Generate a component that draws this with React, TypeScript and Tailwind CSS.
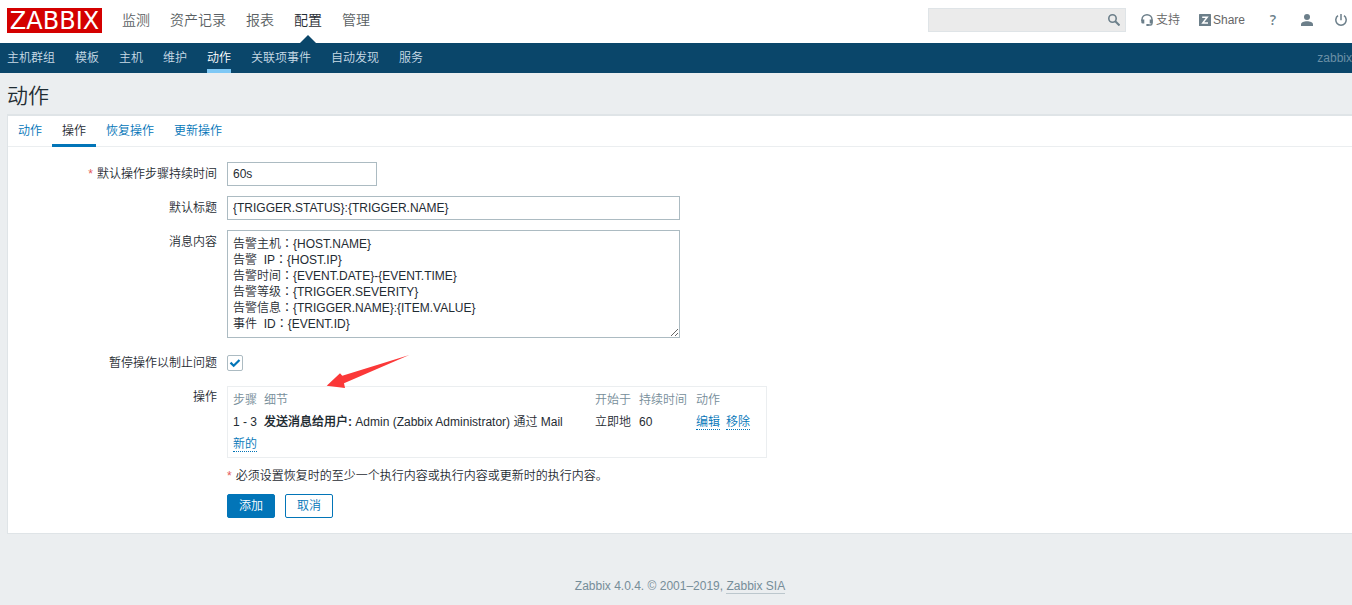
import type { ReactNode } from "react";

const mainMenu = ["监测", "资产记录", "报表", "配置", "管理"];
const subMenu = ["主机群组", "模板", "主机", "维护", "动作", "关联项事件", "自动发现", "服务"];
const tabs = ["动作", "操作", "恢复操作", "更新操作"];

const message = [
  "告警主机：{HOST.NAME}",
  "告警  IP：{HOST.IP}",
  "告警时间：{EVENT.DATE}-{EVENT.TIME}",
  "告警等级：{TRIGGER.SEVERITY}",
  "告警信息：{TRIGGER.NAME}:{ITEM.VALUE}",
  "事件  ID：{EVENT.ID}",
].join("\n");

function SearchIcon() {
  return (
    <svg width="12" height="12" viewBox="0 0 12 12" fill="none" stroke="#6c7f8a">
      <circle cx="4.500" cy="4.500" r="3.700" strokeWidth="1.600" />
      <path d="M7.3 7.3 11.5 11.5" strokeWidth="2" />
    </svg>
  );
}

function HeadsetIcon() {
  return (
    <svg width="12" height="12" viewBox="0 0 12 12" fill="none">
      <path d="M1 7V5.400a5 4.700 0 0 1 10 0V9.400a1.600 1.600 0 0 1-1.600 1.600H6.200" stroke="#6c7f8a" strokeWidth="1.400" />
      <path d="M.300 5.600h3v4H1.700A1.400 1.400 0 0 1 .300 8.200zM8.700 5.600h3v2.600A1.400 1.400 0 0 1 10.300 9.600H8.700zM5.400 10h2.300v2H5.400z" fill="#6c7f8a" />
    </svg>
  );
}

function ShareIcon() {
  return (
    <svg width="12" height="12" viewBox="0 0 12 12">
      <rect width="12" height="12" rx="0.500" fill="#6c7f8a" />
      <path d="M3.200 3.300H8.200L3.800 8.900H9" fill="none" stroke="#fff" strokeWidth="1.500" />
    </svg>
  );
}

function UserIcon() {
  return (
    <svg width="12" height="12" viewBox="0 0 12 12" fill="#6c7f8a">
      <circle cx="6" cy="3" r="3" />
      <path d="M0 12V10.400C0 8.500 3 7.300 6 7.300s6 1.200 6 3.100V12z" />
    </svg>
  );
}

function PowerIcon() {
  return (
    <svg width="12" height="12" viewBox="0 0 12 12" fill="none" stroke="#6c7f8a" strokeWidth="1.500">
      <path d="M6 0v6.200M3 1.700a5.200 5.200 0 1 0 6 0" />
    </svg>
  );
}

function Row({ label, htmlFor, required, children }: { label?: string; htmlFor?: string; required?: boolean; children: ReactNode }) {
  return (
    <div className="flex items-start gap-2.5">
      <div className="w-[209px] shrink-0 text-right leading-6">
        {required && <span className="mr-1 text-[#e45959]">*</span>}
        {label && <label htmlFor={htmlFor}>{label}</label>}
      </div>
      {children}
    </div>
  );
}

function DottedButton({ children }: { children: ReactNode }) {
  return (
    <button type="button" className="cursor-pointer border-b border-dotted border-[#0275b8] pt-0.5 leading-[13px] text-[#0275b8]">
      {children}
    </button>
  );
}

export default function App() {
  return (
    <div className="min-h-screen overflow-x-hidden bg-[#ebeef0] font-['Liberation_Sans','Noto_Sans_CJK_SC_DemiLight','Noto_Sans_CJK_SC',sans-serif] text-xs font-[350] text-[#1f2c33]">
      <header>
        <div className="flex h-[43px] items-start justify-between bg-white pt-2 pr-[5px] pl-[7px]">
          <div className="flex">
            <a href="#home" className="flex h-[25px] w-[95px] items-center justify-center bg-[#d40000] font-['DejaVu_Sans',sans-serif] text-2xl leading-6 font-normal text-white">
              ZABBIX
            </a>
            <nav className="ml-5 flex gap-5 text-sm leading-6 text-[#5a5f63]">
              {mainMenu.map((item) => (
                <a key={item} href="#menu" className={item === "配置" ? "relative h-[35px] text-[#1f2c33]" : ""}>
                  {item}
                  {item === "配置" && (
                    <svg className="absolute bottom-0 left-1.5" width="16" height="8" viewBox="0 0 16 8">
                      <path d="M0 8 8 0l8 8z" fill="#0a466a" />
                    </svg>
                  )}
                </a>
              ))}
            </nav>
          </div>
          <div className="flex h-6 items-center text-[#666]">
            <form className="flex h-6 w-[198px] items-center border border-[#dfe4e7] bg-[#ebebeb] pr-[5px]">
              <input type="text" aria-label="搜索" className="h-full min-w-0 flex-1 px-1 outline-none" />
              <button type="button" aria-label="搜索" className="cursor-pointer">
                <SearchIcon />
              </button>
            </form>
            <a href="#support" className="ml-[15px] flex items-center gap-[3px]">
              <HeadsetIcon />
              支持
            </a>
            <a href="#share" className="ml-[19px] flex items-center gap-0.5">
              <ShareIcon />
              Share
            </a>
            <a href="#help" className="ml-6 w-2 text-center font-['Open_Sans',sans-serif] text-sm font-semibold text-[#6c7f8a]">?</a>
            <a href="#profile" aria-label="用户" className="ml-6">
              <UserIcon />
            </a>
            <a href="#logout" aria-label="退出" className="ml-[22px]">
              <PowerIcon />
            </a>
          </div>
        </div>
        <div className="flex h-[30px] justify-between bg-[#0a466a] pl-[7px] leading-[30px] text-[#c8dbe6]">
          <nav className="flex gap-5">
            {subMenu.map((item) => (
              <a key={item} href="#sub" className={item === "动作" ? "h-[30px] border-b-4 border-[#7ec8f5] font-medium text-white" : ""}>
                {item}
              </a>
            ))}
          </nav>
          <span className="text-[#6a90a6]">zabbix</span>
        </div>
      </header>

      <main className="pl-[7px]">
        <h1 className="pt-[7px] pb-0.5 text-[21px] leading-8">动作</h1>
        <section className="border border-t-2 border-r-0 border-[#dfe4e7] bg-white pb-[15px]">
          <div className="flex h-[31px] border-b border-[#ebeef0]">
            {tabs.map((tab) => (
              <button
                key={tab}
                type="button"
                className={
                  tab === "操作"
                    ? "h-[31px] cursor-pointer border-b-3 border-[#0275b8] px-2.5 pt-px leading-7"
                    : "h-[31px] cursor-pointer px-2.5 pt-px pb-[3px] leading-7 text-[#0275b8]"
                }
              >
                {tab}
              </button>
            ))}
          </div>

          <form className="flex flex-col gap-2.5 pt-[15px]">
            <Row label="默认操作步骤持续时间" htmlFor="duration" required>
              <input id="duration" type="text" defaultValue="60s" className="h-6 w-[150px] border border-[#acbbc2] px-[5px]" />
            </Row>
            <Row label="默认标题" htmlFor="subject">
              <input id="subject" type="text" defaultValue="{TRIGGER.STATUS}:{TRIGGER.NAME}" className="h-6 w-[453px] border border-[#acbbc2] px-[5px]" />
            </Row>
            <Row label="消息内容" htmlFor="message">
              <textarea
                id="message"
                rows={6}
                defaultValue={message}
                className="block w-[453px] resize overflow-auto border border-[#acbbc2] p-[5px] font-['Liberation_Sans','Noto_Sans_CJK_TC_DemiLight','Noto_Sans_CJK_TC',sans-serif] leading-4"
              />
            </Row>
            <div className="pt-[3px]">
              <Row label="暂停操作以制止问题" htmlFor="pause">
                <div className="relative mt-1 h-4 w-4">
                  <input id="pause" type="checkbox" defaultChecked className="peer block h-4 w-4 appearance-none rounded-xs border border-[#acbbc2] bg-white" />
                  <svg className="pointer-events-none absolute inset-0 hidden peer-checked:block" width="16" height="16" viewBox="0 0 16 16">
                    <path d="M3.500 7.600 6.700 10.800 12.500 5" fill="none" stroke="#0275b8" strokeWidth="2.200" />
                  </svg>
                </div>
              </Row>
            </div>
            <Row label="操作">
              <div className="relative mt-px w-[540px] border border-[#ebeef0] px-[5px] py-0.5">
                <table className="w-full table-fixed text-left">
                  <thead>
                    <tr className="h-[22px] text-[#768d99]">
                      <th className="w-[31px] font-[350]">步骤</th>
                      <th className="w-[331px] font-[350]">细节</th>
                      <th className="w-11 font-[350]">开始于</th>
                      <th className="w-[57px] font-[350]">持续时间</th>
                      <th className="font-[350]">动作</th>
                    </tr>
                  </thead>
                  <tbody>
                    <tr className="h-[22px]">
                      <td>1 - 3</td>
                      <td>
                        <b className="font-bold">发送消息给用户:</b> Admin (Zabbix Administrator) 通过 Mail
                      </td>
                      <td>立即地</td>
                      <td>60</td>
                      <td>
                        <div className="flex gap-1.5">
                          <DottedButton>编辑</DottedButton>
                          <DottedButton>移除</DottedButton>
                        </div>
                      </td>
                    </tr>
                    <tr className="h-[22px]">
                      <td colSpan={5}>
                        <div className="flex">
                          <DottedButton>新的</DottedButton>
                        </div>
                      </td>
                    </tr>
                  </tbody>
                </table>
                <svg className="pointer-events-none absolute -top-8 left-[98px]" width="84" height="34" viewBox="0 0 84 34">
                  <path d="M.7 30.700 14 18.300 16.300 20.700 83.300 0 18 28.300 19 33z" fill="#fb3838" />
                </svg>
              </div>
            </Row>
            <div className="-mt-1">
              <Row>
                <p className="leading-6">
                  <span className="mr-1 text-[#e45959]">*</span>
                  必须设置恢复时的至少一个执行内容或执行内容或更新时的执行内容。
                </p>
              </Row>
            </div>
            <div className="-mt-1">
              <Row>
                <div className="flex gap-2.5">
                  <button type="button" className="h-6 cursor-pointer rounded-xs border border-[#0275b8] bg-[#0275b8] px-[11px] font-normal text-white">
                    添加
                  </button>
                  <button type="button" className="h-6 cursor-pointer rounded-xs border border-[#0275b8] bg-white px-[11px] text-[#0275b8]">
                    取消
                  </button>
                </div>
              </Row>
            </div>
          </form>
        </section>
      </main>

      <footer className="pt-11 pb-3 pl-2 text-center leading-4 text-[#768d99]">
        Zabbix 4.0.4. © 2001–2019,{" "}
        <a href="#sia" className="border-b border-[#bcc7cd]">Zabbix SIA</a>
      </footer>
    </div>
  );
}
